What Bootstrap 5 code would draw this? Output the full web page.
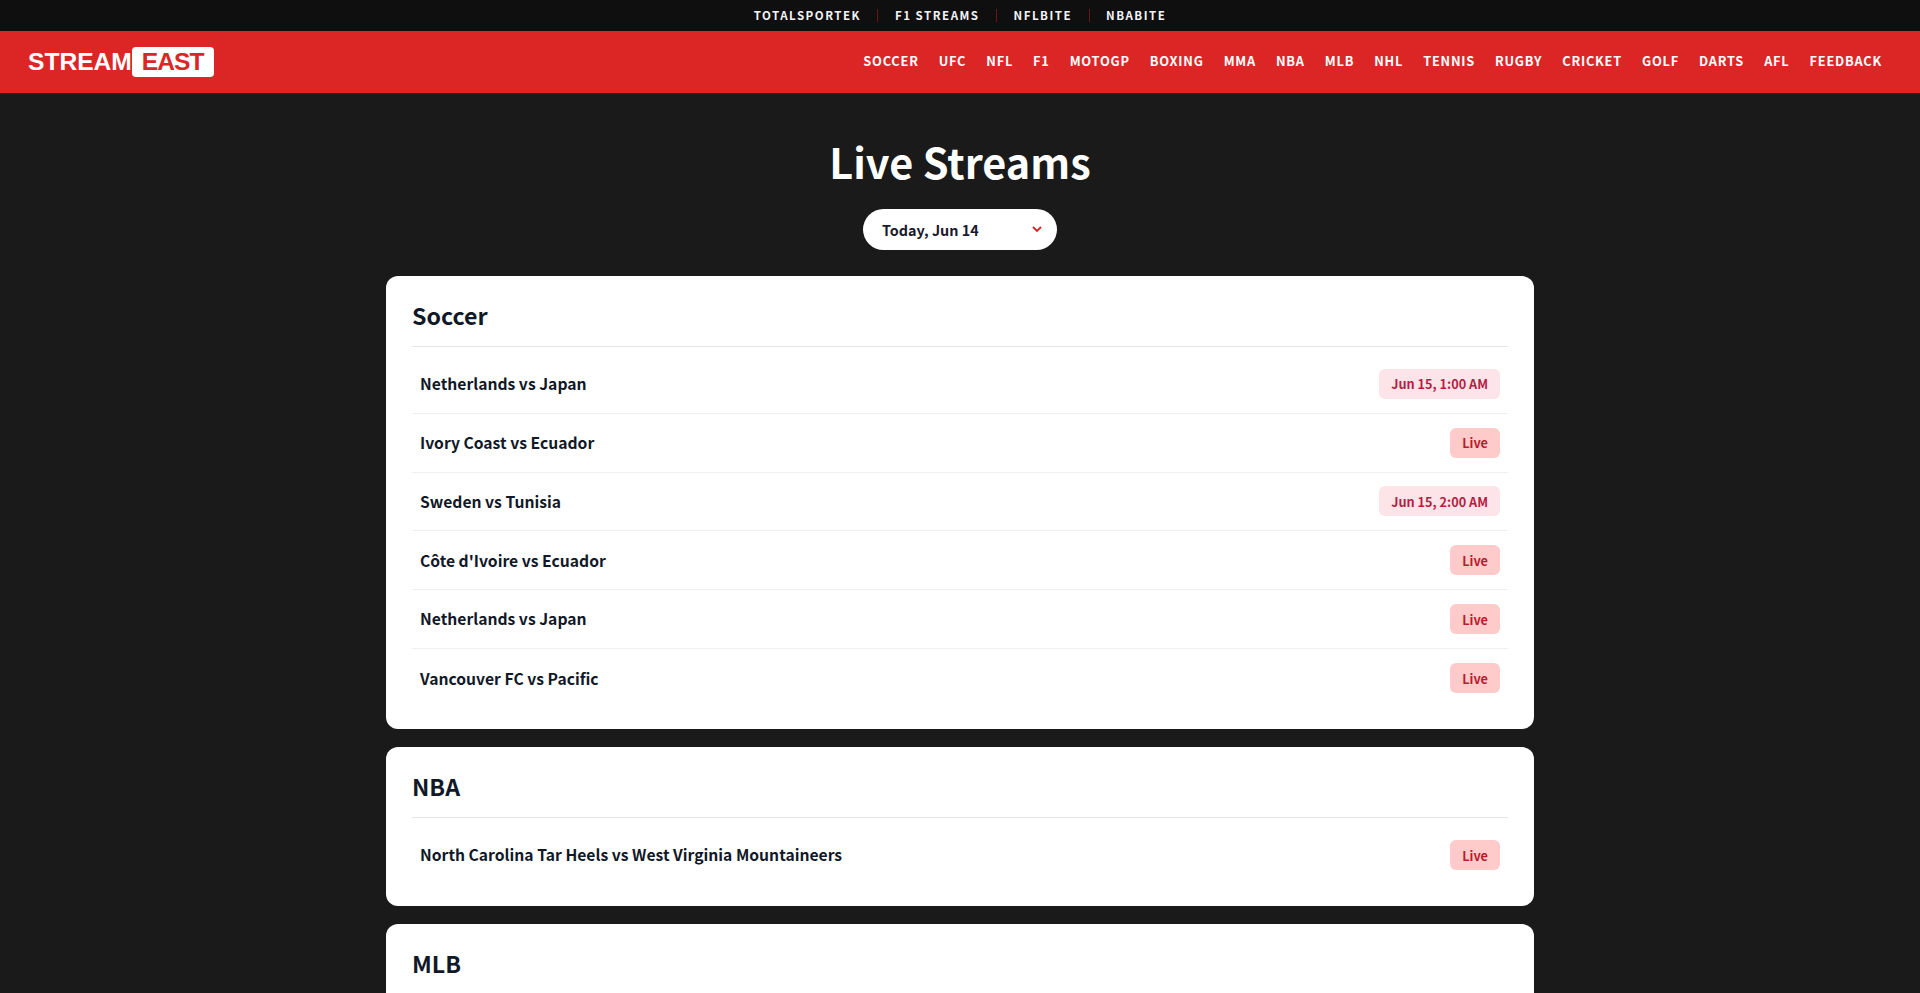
<!DOCTYPE html>
<html lang="en">
<head>
    <meta charset="UTF-8">
    <meta name="viewport" content="width=device-width, initial-scale=1.0">
    <title>StreamEast - Live Streams</title>
    <link href="https://cdn.jsdelivr.net/npm/bootstrap@5.3.3/dist/css/bootstrap.min.css" rel="stylesheet">
    <style>
        body { background: #1a1a1a; font-family: "Noto Sans CJK JP", "Noto Sans", sans-serif; }

        /* top strip */
        .top-strip { background: #0f0f0f; height: 31px; }
        .top-strip a { color: #f3f4f6; font-size: 11.52px; font-weight: 700; letter-spacing: 1.5px; text-decoration: none; text-transform: uppercase; line-height: 1; }
        .top-strip .sep { width: 1px; height: 13px; background: #6b1414; margin: 0 16.5px; }

        /* main nav */
        .site-nav { background: #dc2626; height: 62px; padding: 0 28px; }
        .logo { font-family: "Liberation Sans", Arial, sans-serif; font-weight: 700; font-size: 24.6px; color: #fff; text-decoration: none; line-height: 1; }
        .logo:hover { color: #fff; }
        .logo span { background: #fff; color: #dc2626; border-radius: 4px; padding: 0 11px 0 10px; height: 30px; letter-spacing: -1px; display: inline-flex; align-items: center; }
        .site-nav .nav-link { color: #fff; font-size: 12.8px; font-weight: 700; letter-spacing: .77px; text-transform: uppercase; padding: 0; line-height: 1; }
        .site-nav .navbar-nav { gap: 20px; flex-direction: row; margin: 0 10px 1px 0; }

        /* page head */
        .page-title { color: #fff; font-size: 41.4px; font-weight: 700; line-height: 49px; margin: 0; }
        .date-btn { width: 194px; height: 41px; margin-top: 23px; background: #fff; color: #1a1a2e; border: 0; border-radius: 21px; font-size: 14.4px; font-weight: 700; padding: 0 15px 0 19px; }
        .date-btn:hover, .date-btn:focus, .date-btn.show { background: #fff; color: #1a1a2e; }
        .page-head { padding-top: 44px; padding-bottom: 26px; }

        /* sections */
        .events { max-width: 1148px; gap: 18px; }
        .sport-card { border: 0; border-radius: 12px; padding: 25px 26px 21px; }
        .sport-card h2 { color: #111827; font-size: 23.2px; font-weight: 700; line-height: 28px; margin: 0; padding-bottom: 17px; border-bottom: 1.5px solid #e5e7eb; }
        .sport-card .list-group-item { height: 58.8px; padding: 0 8px; border-color: #f0f0f0; font-size: 15.68px; font-weight: 700; color: #111827; background: transparent; }
        .sport-card .list-group { margin-top: 8px; }
        .tag { height: 30px; padding: 0 12px; border-radius: 6px; font-size: 12.7px; font-weight: 700; display: inline-flex; align-items: center; }
        .tag-time { background: #fce4e8; color: #b71c45; }
        .tag-live { background: #fecaca; color: #b91c2c; }
    </style>
</head>
<body>
    <!-- Partner links -->
    <div class="top-strip d-flex justify-content-center align-items-center">
        <a href="#">Totalsportek</a><span class="sep"></span>
        <a href="#">F1 Streams</a><span class="sep"></span>
        <a href="#">NFLBite</a><span class="sep"></span>
        <a href="#">NBABite</a>
    </div>

    <!-- Main nav -->
    <nav class="navbar site-nav">
        <a class="logo d-flex align-items-center" href="#">STREAM<span>EAST</span></a>
        <ul class="navbar-nav">
            <li class="nav-item"><a class="nav-link" href="#">Soccer</a></li>
            <li class="nav-item"><a class="nav-link" href="#">UFC</a></li>
            <li class="nav-item"><a class="nav-link" href="#">NFL</a></li>
            <li class="nav-item"><a class="nav-link" href="#">F1</a></li>
            <li class="nav-item"><a class="nav-link" href="#">MotoGP</a></li>
            <li class="nav-item"><a class="nav-link" href="#">Boxing</a></li>
            <li class="nav-item"><a class="nav-link" href="#">MMA</a></li>
            <li class="nav-item"><a class="nav-link" href="#">NBA</a></li>
            <li class="nav-item"><a class="nav-link" href="#">MLB</a></li>
            <li class="nav-item"><a class="nav-link" href="#">NHL</a></li>
            <li class="nav-item"><a class="nav-link" href="#">Tennis</a></li>
            <li class="nav-item"><a class="nav-link" href="#">Rugby</a></li>
            <li class="nav-item"><a class="nav-link" href="#">Cricket</a></li>
            <li class="nav-item"><a class="nav-link" href="#">Golf</a></li>
            <li class="nav-item"><a class="nav-link" href="#">Darts</a></li>
            <li class="nav-item"><a class="nav-link" href="#">AFL</a></li>
            <li class="nav-item"><a class="nav-link" href="#">Feedback</a></li>
        </ul>
    </nav>

    <!-- Title and date picker -->
    <header class="page-head d-flex flex-column align-items-center">
        <h1 class="page-title">Live Streams</h1>
        <button type="button" class="btn date-btn d-flex justify-content-between align-items-center">
            Today, Jun 14
            <svg width="10" height="7" viewBox="0 0 10 7" fill="none" stroke="#dc2626" stroke-width="1.9"><path d="M1 1l4 4 4-4"/></svg>
        </button>
    </header>

    <main class="events container-fluid px-0 d-flex flex-column">
        <section class="card sport-card">
            <h2>Soccer</h2>
            <ul class="list-group list-group-flush">
                <li class="list-group-item d-flex justify-content-between align-items-center">Netherlands vs Japan <span class="tag tag-time">Jun 15, 1:00 AM</span></li>
                <li class="list-group-item d-flex justify-content-between align-items-center">Ivory Coast vs Ecuador <span class="tag tag-live">Live</span></li>
                <li class="list-group-item d-flex justify-content-between align-items-center">Sweden vs Tunisia <span class="tag tag-time">Jun 15, 2:00 AM</span></li>
                <li class="list-group-item d-flex justify-content-between align-items-center">Côte d'Ivoire vs Ecuador <span class="tag tag-live">Live</span></li>
                <li class="list-group-item d-flex justify-content-between align-items-center">Netherlands vs Japan <span class="tag tag-live">Live</span></li>
                <li class="list-group-item d-flex justify-content-between align-items-center">Vancouver FC vs Pacific <span class="tag tag-live">Live</span></li>
            </ul>
        </section>

        <section class="card sport-card">
            <h2>NBA</h2>
            <ul class="list-group list-group-flush">
                <li class="list-group-item d-flex justify-content-between align-items-center">North Carolina Tar Heels vs West Virginia Mountaineers <span class="tag tag-live">Live</span></li>
            </ul>
        </section>

        <section class="card sport-card">
            <h2>MLB</h2>
        </section>
    </main>

    <script src="https://cdn.jsdelivr.net/npm/bootstrap@5.3.3/dist/js/bootstrap.bundle.min.js"></script>
</body>
</html>
